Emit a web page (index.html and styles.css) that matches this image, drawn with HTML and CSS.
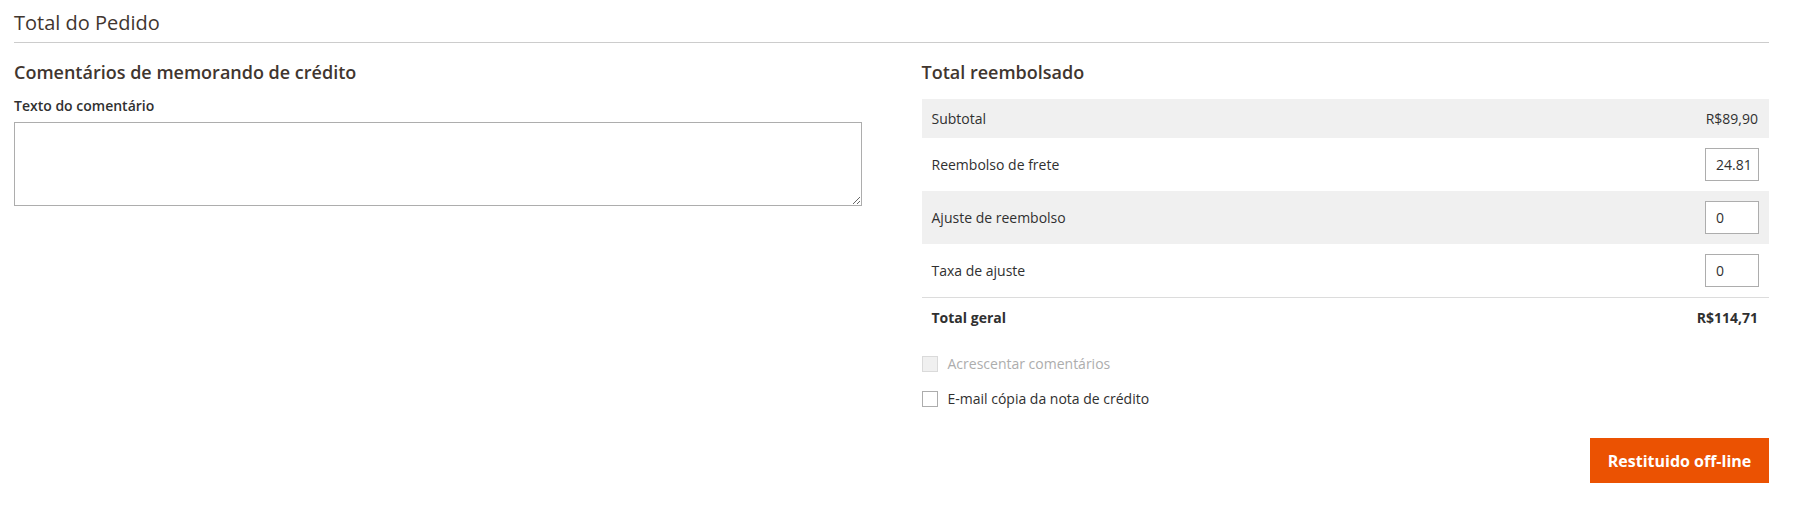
FILE: index.html
```html
<!DOCTYPE html>
<html lang="pt-BR">
<head>
<meta charset="utf-8">
<title>Total do Pedido</title>
<link rel="stylesheet" href="styles.css">
</head>
<body>
<div class="page">
  <div class="section-title">Total do Pedido</div>
  <div class="columns">
    <div class="col">
      <h2 class="item-title">Comentários de memorando de crédito</h2>
      <label class="field-label" for="comment">Texto do comentário</label>
      <textarea id="comment" class="comment-box"></textarea>
    </div>
    <div class="col">
      <h2 class="item-title">Total reembolsado</h2>
      <div class="totals">
        <div class="row shade short">
          <span>Subtotal</span>
          <span class="value">R$89,90</span>
        </div>
        <div class="row">
          <span>Reembolso de frete</span>
          <input class="num" type="text" value="24.81">
        </div>
        <div class="row shade">
          <span>Ajuste de reembolso</span>
          <input class="num" type="text" value="0">
        </div>
        <div class="row">
          <span>Taxa de ajuste</span>
          <input class="num" type="text" value="0">
        </div>
        <div class="row short grand">
          <span>Total geral</span>
          <span class="value">R$114,71</span>
        </div>
      </div>
      <div class="checks">
        <label class="check disabled"><span class="box"></span>Acrescentar comentários</label>
        <label class="check"><span class="box"></span>E-mail cópia da nota de crédito</label>
      </div>
      <div class="actions">
        <button class="primary" type="button">Restituido off-line</button>
      </div>
    </div>
  </div>
</div>
</body>
</html>
```
FILE: styles.css
```css
html, body {
  margin: 0;
  padding: 0;
  background: #ffffff;
}
body {
  font-family: "Open Sans", "Noto Sans", sans-serif;
  color: #303030;
  font-size: 14px;
}
.page {
  padding: 11px 28px 0 14px;
}
.section-title {
  font-size: 20px;
  line-height: 24px;
  font-weight: 400;
  color: #41362f;
  padding-bottom: 7px;
  border-bottom: 1px solid #cccccc;
}
.columns {
  display: grid;
  grid-template-columns: 1fr 1fr;
  column-gap: 60px;
  padding-top: 18px;
}
.col {
  display: flex;
  flex-direction: column;
}
.item-title {
  margin: 0;
  font-size: 18px;
  line-height: 22px;
  font-weight: 600;
  color: #41362f;
}
.field-label {
  display: block;
  margin-top: 13px;
  font-size: 14px;
  line-height: 19px;
  font-weight: 600;
  color: #303030;
}
.comment-box {
  display: block;
  margin-top: 7px;
  width: 100%;
  height: 84px;
  box-sizing: border-box;
  border: 1px solid #adadad;
  border-radius: 0;
  padding: 6px 10px;
  font-family: inherit;
  font-size: 14px;
  outline: none;
}
.totals {
  margin-top: 16px;
}
.row {
  display: flex;
  align-items: center;
  justify-content: space-between;
  padding: 10px 10px;
  line-height: 19px;
  min-height: 33px;
}
.row.short {
  min-height: 19px;
}
.row.shade {
  background: #f0f0f0;
}
.row.grand {
  border-top: 1px solid #dcdcdc;
  font-weight: 700;
}
.value {
  padding-right: 1px;
}
.num {
  width: 54px;
  height: 33px;
  box-sizing: border-box;
  border: 1px solid #adadad;
  border-radius: 0;
  padding: 0 0 0 10px;
  font-family: inherit;
  font-size: 14px;
  color: #303030;
  background: #ffffff;
  outline: none;
}
.checks {
  margin-top: 19px;
  display: flex;
  flex-direction: column;
  gap: 19px;
}
.check {
  display: flex;
  align-items: center;
  gap: 10px;
  line-height: 16px;
  color: #303030;
}
.box {
  width: 16px;
  height: 16px;
  box-sizing: border-box;
  border: 1px solid #adadad;
  background: #ffffff;
}
.check.disabled {
  color: #adadad;
}
.check.disabled .box {
  border-color: #dadada;
  background: #f0f0f0;
}
.actions {
  display: flex;
  justify-content: flex-end;
  margin-top: 31px;
}
.primary {
  height: 45px;
  width: 179px;
  border: 0;
  border-radius: 0;
  background: #eb5202;
  color: #ffffff;
  font-family: inherit;
  font-size: 16px;
  font-weight: 700;
  padding: 0;
}
```
